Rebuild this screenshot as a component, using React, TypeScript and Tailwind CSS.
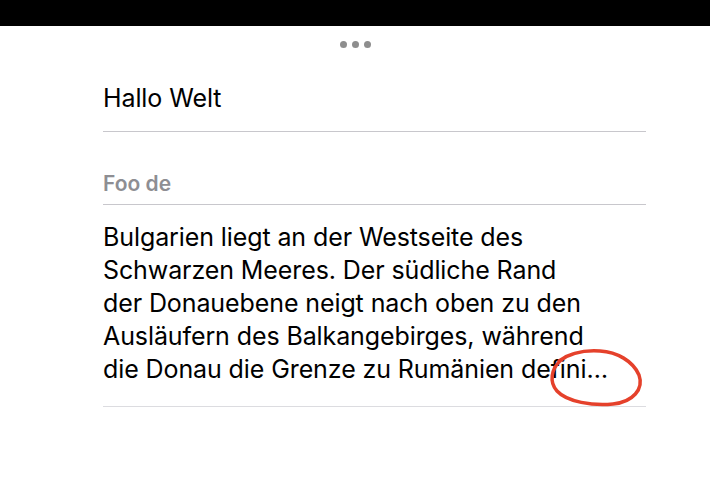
import React from "react";

const lines = [
  "Bulgarien liegt an der Westseite des",
  "Schwarzen Meeres. Der südliche Rand",
  "der Donauebene neigt nach oben zu den",
  "Ausläufern des Balkangebirges, während",
  "die Donau die Grenze zu Rumänien defini…",
];

export default function App() {
  return (
    <div
      className="relative w-[710px] h-[486px] bg-white overflow-hidden text-black"
      style={{ fontFamily: "Inter, 'Noto Sans', sans-serif" }}
    >
      <div className="h-[26px] bg-black" />
      <div className="flex justify-center gap-[5px] pt-[15px]">
        <span className="w-[7px] h-[7px] rounded-full bg-[#8e8e8e]" />
        <span className="w-[7px] h-[7px] rounded-full bg-[#8e8e8e]" />
        <span className="w-[7px] h-[7px] rounded-full bg-[#8e8e8e]" />
      </div>
      <div className="ml-[103px] w-[543px]">
        <div className="pt-[36px] pb-[19px] text-[25px] leading-[28px] tracking-[-0.1px]">
          Hallo Welt
        </div>
        <div className="h-px bg-[#c8c7cc]" />
        <div className="pt-[40px] pb-[8px] text-[21px] leading-[24px] font-semibold text-[#8e8e93]">
          Foo de
        </div>
        <div className="h-px bg-[#c8c7cc]" />
        <div className="pt-[16px] pb-[20px] text-[25px] leading-[33px] tracking-[-0.1px]">
          {lines.map((l) => (
            <div key={l} className="whitespace-nowrap">
              {l}
            </div>
          ))}
        </div>
        <div className="h-px bg-[#dcdce0]" />
      </div>
      <svg
        className="absolute left-[545px] top-[345px]"
        width="105"
        height="65"
        viewBox="0 0 105 65"
        fill="none"
      >
        <path
          d="M14 16 C 25 8, 40 5, 55 6 C 72 7, 88 16, 94 30 C 99 44, 88 57, 68 59 C 48 61, 22 57, 12 46 C 4 37, 6 24, 16 15 C 20 12, 24 10, 28 9"
          stroke="#e5412b"
          strokeWidth="3.5"
          strokeLinecap="round"
        />
      </svg>
    </div>
  );
}
